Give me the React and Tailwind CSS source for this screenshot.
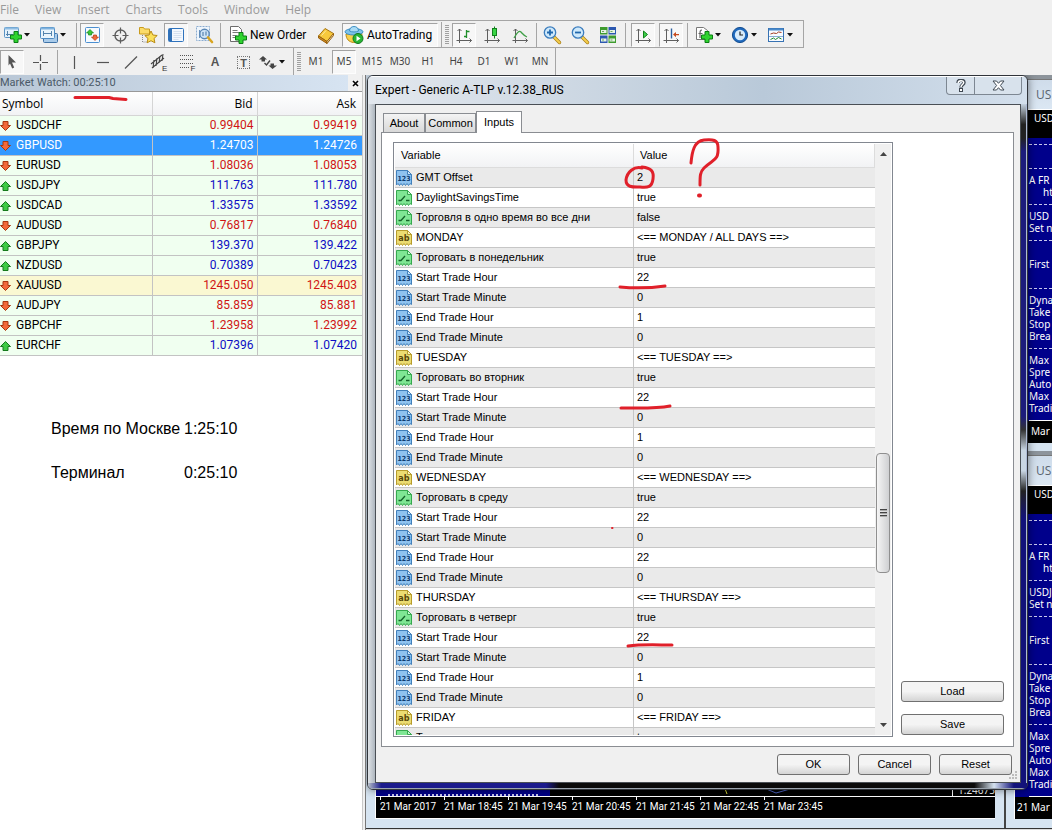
import React from 'react';

const UI = "font-['Liberation_Sans',sans-serif] text-[11px]";

/* ---------- icons ---------- */

function Plus({ x = 8, y = 7 }) {
  return (
    <path
      d={`M${x + 3.5} ${y}h4v3.5h3.5v4h-3.5v3.5h-4v-3.5h-3.5v-4h3.5z`}
      fill="#2fd32f"
      stroke="#0b7d14"
      strokeWidth="1"
    />
  );
}

function Icon({ children, size = 20 }) {
  return (
    <svg width={size} height={size} viewBox="0 0 20 20" fill="none" aria-hidden="true" className="shrink-0">
      {children}
    </svg>
  );
}

const NewChartIcon = () => (
  <Icon>
    <rect x="1.500" y="2.500" width="14" height="10" rx="1" fill="#e4f1fb" stroke="#5b93c4" />
    <path d="M1.500 3.500h14" stroke="#8fbde3" strokeWidth="2" />
    <path d="M4.500 6v5M3 9.500h7M12.500 6v2" stroke="#5584ad" />
    <Plus x={7.5} y={6.5} />
  </Icon>
);

const ProfilesIcon = () => (
  <Icon>
    <rect x="4.500" y="8.500" width="14" height="9" rx="1" fill="#a9cbea" stroke="#3f73a8" />
    <rect x="1.500" y="2.500" width="14" height="11" rx="1" fill="#e9f4fc" stroke="#4f8bc2" />
    <path d="M1.500 3.500h14" stroke="#7fb2de" strokeWidth="2" />
    <path d="M4.500 6v5M12.500 6v5M4 8.500h9" stroke="#5584ad" />
  </Icon>
);

const MarketIcon = () => (
  <Icon>
    <rect x="3.500" y="2.500" width="14" height="15" rx="1" fill="#f6faff" stroke="#4b8fd0" />
    <path d="M8 4.500l3.500 3.500h-2v2h-3V8h-2z" fill="#39c739" stroke="#12861a" strokeWidth=".7" />
    <path d="M13 15.500L9.500 12h2v-2h3v2h2z" fill="#f06a3a" stroke="#b53a12" strokeWidth=".7" />
  </Icon>
);

const TargetIcon = () => (
  <Icon>
    <circle cx="10.500" cy="10.500" r="5.500" stroke="#5d5d5d" strokeWidth="1.400" />
    <path d="M10.500 2.500v6M10.500 12.500v6M2.500 10.500h6M12.500 10.500h6" stroke="#5d5d5d" strokeWidth="1.200" />
  </Icon>
);

const FolderStarIcon = () => (
  <Icon>
    <path d="M1.500 2.500h4l1 1.500h5v5h-10z" fill="#fbdc6a" stroke="#c99b1c" />
    <path d="M4.500 10v7h4" stroke="#888" strokeDasharray="1 1" />
    <path d="M13 6l1.900 4 4.300.5-3.200 3 .9 4.300-3.900-2.100-3.900 2.100.9-4.300-3.200-3 4.300-.5z" fill="#fbe05b" stroke="#b98a12" />
  </Icon>
);

const NavigatorIcon = () => (
  <Icon>
    <rect x="2.500" y="3.500" width="15" height="13" rx="1" fill="#f3f8fe" stroke="#2f73bd" />
    <path d="M4.500 4v12" stroke="#2f6fb5" strokeWidth="3" />
    <path d="M7.500 6.500h8M7.500 8.500h8M7.500 10.500h8M7.500 12.500h8M7.500 14.500h5" stroke="#d5e1ef" />
  </Icon>
);

const TesterIcon = () => (
  <Icon>
    <path d="M2.500 1.500h13v14h-13z" fill="#eef5fc" stroke="#8bacd0" strokeDasharray="2 1" />
    <path d="M5.500 5v8" stroke="#6b93bd" />
    <circle cx="10.500" cy="9" r="4.700" fill="#c8e1f6" fillOpacity=".85" stroke="#5a87b5" strokeWidth="1.400" />
    <path d="M9 7v4M12 6.500v4" stroke="#41719f" />
    <path d="M14 12.500l4 4.500" stroke="#d9a520" strokeWidth="2.600" strokeLinecap="round" />
  </Icon>
);

const NewOrderIcon = () => (
  <Icon>
    <path d="M2.500 1.500h8l3 3v12h-11z" fill="#fff" stroke="#6d6d6d" />
    <path d="M4.500 5.500h5M4.500 7.500h7M4.500 10.500h4M4.500 12.500h3" stroke="#7a7a7a" />
    <Plus x={7.5} y={7.5} />
  </Icon>
);

const BookIcon = () => (
  <Icon>
    <path d="M2.500 11L9 3.500l8.500 5L11 16.500z" fill="#f7c93c" stroke="#a87410" />
    <path d="M2.500 11v2L11 18.500v-2z" fill="#d88e1c" stroke="#955f0e" />
    <path d="M11 16.500l6.500-8v2L11 18.500z" fill="#fff3cf" stroke="#955f0e" />
    <path d="M5.500 10.500l4.500-5" stroke="#fdeaa0" />
  </Icon>
);

const AutoIcon = () => (
  <Icon>
    <path d="M2 9c0 5 3 8 7.500 8.500S18 13 18 8.500z" fill="#f8d04c" stroke="#b98912" />
    <ellipse cx="10" cy="6.800" rx="9" ry="3.200" fill="#7ec3ea" stroke="#3d8fc4" />
    <path d="M5.500 6c0-3 2-4.500 4.500-4.500s4.500 1.500 4.500 4.500c-2 1.300-7 1.300-9 0z" fill="#a9dbf5" stroke="#3d8fc4" />
    <circle cx="14" cy="13.500" r="5" fill="#27b534" stroke="#10761b" />
    <path d="M12.500 10.800l4 2.700-4 2.700z" fill="#fff" />
  </Icon>
);

const Axes = () => (
  <path d="M5.500 4v14M2.500 15.500h15M3.500 6l2-2 2 2M15.500 13.500l2 2-2 2" stroke="#5f5f5f" />
);
const BarsIcon = () => (
  <Icon>
    <Axes />
    <path d="M12.500 5v8M12.500 6.500h3M10 11.500h2.500" stroke="#1f8f2a" strokeWidth="1.300" />
  </Icon>
);
const CandleIcon = () => (
  <Icon>
    <Axes />
    <path d="M12.500 1.500v12" stroke="#13811d" />
    <rect x="10.500" y="3.500" width="4" height="7" fill="#38d544" stroke="#13811d" />
  </Icon>
);
const LineIcon = () => (
  <Icon>
    <Axes />
    <path d="M4 13c3-5 5-8 7-6s3 4 6 5" stroke="#3f9f47" strokeWidth="1.300" />
  </Icon>
);
const ZoomIcon = ({ plus }) => (
  <Icon>
    <path d="M12 12l5.500 5.500" stroke="#a87f1b" strokeWidth="3.400" strokeLinecap="round" />
    <path d="M12 12l5.500 5.500" stroke="#f5ce4c" strokeWidth="2" strokeLinecap="round" />
    <circle cx="8" cy="7.500" r="5.700" fill="#cfe9fb" stroke="#3c7dbd" strokeWidth="1.300" />
    <path d={plus ? 'M5 7.500h6M8 4.500v6' : 'M5 7.500h6'} stroke="#2168ad" strokeWidth="1.800" />
  </Icon>
);
const TileIcon = () => (
  <Icon>
    <rect x="2" y="2" width="7.500" height="7.500" fill="#3e9b2f" />
    <rect x="10.500" y="2" width="7.500" height="7.500" fill="#2c58b0" />
    <rect x="2" y="10.500" width="7.500" height="7.500" fill="#2c58b0" />
    <rect x="10.500" y="10.500" width="7.500" height="7.500" fill="#3e9b2f" />
    <path d="M3 6.500h5.500M11.500 6.500h5.500M3 15h5.500M11.500 15h5.500" stroke="#e7f4e6" strokeWidth="3" />
    <path d="M4 6.500h2M12.500 6.500h2M4 15h2M12.500 15h2" stroke="#6da463" />
  </Icon>
);
const ScrollIcon = () => (
  <Icon>
    <Axes />
    <path d="M10.500 6v7l4-3.500z" fill="#3fd04a" stroke="#13811d" />
  </Icon>
);
const ShiftIcon = () => (
  <Icon>
    <Axes />
    <path d="M10.500 3.500v10" stroke="#2b5f9e" strokeWidth="1.400" />
    <path d="M12 9.500l3-2.500v2h3v1.200h-3v2z" fill="#c74a1c" />
  </Icon>
);
const IndicatorsIcon = () => (
  <Icon>
    <path d="M2.500 2.500h7l4 3v9h-11z" fill="#fff" stroke="#777" />
    <path d="M8 5c-2 0-2 1.500-2 3v5M4.500 8.500h4" stroke="#666" strokeWidth="1.200" />
    <Plus x={7.5} y={6.5} />
  </Icon>
);
const ClockIcon = () => (
  <Icon>
    <circle cx="10" cy="10" r="7.600" fill="#1f69bd" stroke="#164f91" />
    <circle cx="10" cy="10" r="5.200" fill="#d7ebfb" />
    <path d="M10 6.500V10h3" stroke="#222" strokeWidth="1.200" />
  </Icon>
);
const TemplateIcon = () => (
  <Icon>
    <rect x="2.500" y="3.500" width="15" height="13" fill="#f8fbff" stroke="#3772b3" />
    <path d="M3 4.500h14" stroke="#4b8bcb" strokeWidth="2" />
    <path d="M4.500 9l3-1 3 .5 2-1.500 3 .5" stroke="#a33c22" />
    <path d="M3 11.500h14" stroke="#8aaed3" />
    <path d="M4.500 14.500l3-1.500 2 1.500 3-2 3 1.500" stroke="#218a2d" />
  </Icon>
);

const CursorIcon = () => (
  <Icon><path d="M6.500 3l7.500 7.500h-4l2.200 5-2 .9-2.200-5-1.500 2z" fill="#555" /></Icon>
);
const CrossIcon = () => (
  <Icon><path d="M10.500 3v6M10.500 12v6M3 10.500h6M12 10.500h6" stroke="#555" strokeWidth="1.200" /></Icon>
);
const VLineIcon = () => <Icon><path d="M9.500 4v13" stroke="#555" strokeWidth="1.200" /></Icon>;
const HLineIcon = () => <Icon><path d="M4 10.500h12" stroke="#555" strokeWidth="1.200" /></Icon>;
const TrendIcon = () => <Icon><path d="M4 16.500L16 4.500" stroke="#555" strokeWidth="1.200" /></Icon>;
const ChannelIcon = () => (
  <Icon>
    <path d="M2 12L13 3M3 16L15 6M5 8l-1 8M8 6l-1 8M11 4l-1 7M14 2l-1 7" stroke="#444" strokeWidth="1.100" />
    <text x="13" y="19" fontSize="8" fill="#333" fontFamily="Liberation Sans">E</text>
  </Icon>
);
const FiboIcon = () => (
  <Icon>
    <path d="M3 3.500h14M3 7.500h14M3 11.500h14M3 15.500h9" stroke="#555" strokeDasharray="1 1" />
    <text x="13.500" y="19" fontSize="8" fill="#333" fontFamily="Liberation Sans">F</text>
  </Icon>
);
const LabelIcon = () => (
  <Icon>
    <path d="M4 4.500h13M4 16.500h13M4.500 5v12M16.500 5v12" stroke="#777" strokeDasharray="1 1" />
    <text x="10.500" y="14.500" textAnchor="middle" fontSize="11" fontWeight="bold" fill="#555" fontFamily="Liberation Sans">T</text>
  </Icon>
);
const ShapesIcon = () => (
  <Icon>
    <path d="M5 4l4 3.500H7v2H3.500v-2H1zM14.500 17l-4-3.500h2v-2h3.500v2h3z" fill="#444" />
    <path d="M6.500 11l2 2 3.500-4.500" stroke="#444" strokeWidth="1.400" />
  </Icon>
);

/* ---------- toolbar parts ---------- */

function Tool({ label, active, children }) {
  return (
    <button
      type="button"
      aria-label={label}
      className={`flex h-6 w-6 shrink-0 items-center justify-center ${
        active ? 'border border-[#fdfdfd] border-t-[#a3a3a3] border-l-[#a3a3a3] bg-[#f7f7f7]' : ''
      }`}
    >
      {children}
    </button>
  );
}

function DropTool({ label, children }) {
  return (
    <button type="button" aria-label={label} className="flex h-6 w-9 shrink-0 items-center gap-px pl-[3px]">
      {children}
      <svg width="6" height="4" viewBox="0 0 6 4" aria-hidden="true" className="shrink-0">
        <path d="M0 0h6L3 3.500z" fill="#111" />
      </svg>
    </button>
  );
}

const Sep = ({ wide }) => (
  <div className={`flex h-6 shrink-0 justify-center ${wide ? 'w-[11px]' : 'w-2'}`}>
    <div className="h-full w-px bg-[#a5a5a5]" />
  </div>
);

const Grip = () => (
  <svg width="4" height="20" viewBox="0 0 4 20" aria-hidden="true" className="mx-[3px] shrink-0">
    <path d="M2 0v20" stroke="#a0a0a0" strokeWidth="4" strokeDasharray="1 1" />
  </svg>
);

function Toolbars() {
  return (
    <>
      <div className="flex h-7 w-fit items-center border-t border-r border-b border-[#a5a5a5] pt-px pr-1">
        <DropTool label="New chart"><NewChartIcon /></DropTool>
        <DropTool label="Profiles"><ProfilesIcon /></DropTool>
        <Sep />
        <div className="flex gap-1">
          <Tool label="Market watch" active><MarketIcon /></Tool>
          <Tool label="Data window"><TargetIcon /></Tool>
          <Tool label="Favorites"><FolderStarIcon /></Tool>
          <Tool label="Navigator" active><NavigatorIcon /></Tool>
          <Tool label="Strategy tester"><TesterIcon /></Tool>
        </div>
        <Sep />
        <button
          type="button"
          className="flex h-6 w-[90px] items-center pl-1 font-['Roboto',sans-serif] text-[12px] whitespace-nowrap"
        >
          <NewOrderIcon />
          <span className="pl-0.5">New Order</span>
        </button>
        <Tool label="MetaEditor"><BookIcon /></Tool>
        <button
          type="button"
          className="mr-[3px] ml-1 flex h-6 w-24 items-center gap-[3px] border border-[#fdfdfd] border-t-[#a3a3a3] border-l-[#a3a3a3] bg-[#f7f7f7] pl-px font-['Roboto',sans-serif] text-[12px] whitespace-nowrap"
        >
          <AutoIcon />
          AutoTrading
        </button>
        <div className="h-full w-px bg-[#a5a5a5]" />
        <Grip />
        <div className="flex gap-1">
          <Tool label="Bar chart" active><BarsIcon /></Tool>
          <Tool label="Candlesticks"><CandleIcon /></Tool>
          <Tool label="Line chart"><LineIcon /></Tool>
        </div>
        <Sep />
        <div className="flex gap-1">
          <Tool label="Zoom in"><ZoomIcon plus /></Tool>
          <Tool label="Zoom out"><ZoomIcon /></Tool>
          <Tool label="Tile windows"><TileIcon /></Tool>
        </div>
        <Sep wide />
        <div className="flex gap-1">
          <Tool label="Auto scroll" active><ScrollIcon /></Tool>
          <Tool label="Chart shift" active><ShiftIcon /></Tool>
        </div>
        <Sep />
        <DropTool label="Indicators"><IndicatorsIcon /></DropTool>
        <DropTool label="Periods"><ClockIcon /></DropTool>
        <DropTool label="Templates"><TemplateIcon /></DropTool>
      </div>
      <div className="flex h-[27px] w-fit items-center border-r border-[#a5a5a5] pr-[3px]">
        <div className="flex gap-1">
          <Tool label="Cursor" active><CursorIcon /></Tool>
          <Tool label="Crosshair"><CrossIcon /></Tool>
        </div>
        <Sep wide />
        <div className="flex gap-1">
          <Tool label="Vertical line"><VLineIcon /></Tool>
          <Tool label="Horizontal line"><HLineIcon /></Tool>
          <Tool label="Trendline"><TrendIcon /></Tool>
          <Tool label="Equidistant channel"><ChannelIcon /></Tool>
          <Tool label="Fibonacci"><FiboIcon /></Tool>
          <button
            type="button"
            className="h-6 w-6 font-['Liberation_Sans',sans-serif] text-[12px] font-bold text-[#555]"
          >
            A
          </button>
          <Tool label="Text label"><LabelIcon /></Tool>
        </div>
        <DropTool label="Arrows"><ShapesIcon /></DropTool>
        <div className="ml-0.5 h-full w-px bg-[#a5a5a5]" />
        <Grip />
        <div className="flex gap-1">
          {['M1', 'M5', 'M15', 'M30', 'H1', 'H4', 'D1', 'W1', 'MN'].map((t) => (
            <button
              key={t}
              type="button"
              className={`flex h-6 w-6 items-center justify-center font-['Noto_Sans',sans-serif] text-[10px] text-[#444] ${
                t === 'M5' ? 'border border-[#fdfdfd] border-t-[#a3a3a3] border-l-[#a3a3a3] bg-[#f7f7f7]' : ''
              }`}
            >
              {t}
            </button>
          ))}
        </div>
      </div>
    </>
  );
}

/* ---------- market watch ---------- */

const QUOTES = [
  ['USDCHF', '0.99404', '0.99419', 'down'],
  ['GBPUSD', '1.24703', '1.24726', 'down', 'selected'],
  ['EURUSD', '1.08036', '1.08053', 'down'],
  ['USDJPY', '111.763', '111.780', 'up'],
  ['USDCAD', '1.33575', '1.33592', 'up'],
  ['AUDUSD', '0.76817', '0.76840', 'down'],
  ['GBPJPY', '139.370', '139.422', 'up'],
  ['NZDUSD', '0.70389', '0.70423', 'up'],
  ['XAUUSD', '1245.050', '1245.403', 'down', 'gold'],
  ['AUDJPY', '85.859', '85.881', 'down'],
  ['GBPCHF', '1.23958', '1.23992', 'down'],
  ['EURCHF', '1.07396', '1.07420', 'up'],
];

const ROW_BG = { selected: 'bg-[#3399ff]', gold: 'bg-[#faf8d2]' };

function Arrow({ dir }) {
  return (
    <svg width="12" height="12" viewBox="0 0 12 12" aria-hidden="true" className="shrink-0">
      {dir === 'up' ? (
        <path d="M5.500 1.500l5 5H8v4H3v-4H.5z" fill="#3ecb45" stroke="#157a1c" />
      ) : (
        <path d="M5.500 10.500l5-5H8v-4H3v4H.5z" fill="#f2693a" stroke="#a63710" />
      )}
    </svg>
  );
}

function MarketWatch() {
  return (
    <section className="flex w-[363px] shrink-0 flex-col border-r border-[#c9c9c9] bg-white">
      <div className="flex h-4 items-center bg-[#f0f0f0]">
        <h2 className="h-full flex-1 bg-gradient-to-r from-[#b9c7d6] to-[#d7e4f2] font-['Roboto',sans-serif] text-[11px] leading-4 text-[#4b5a68]">
          Market Watch: 00:25:10
        </h2>
        <button type="button" aria-label="Close" className="flex h-4 w-[14px] items-center justify-center">
          <svg width="7" height="7" viewBox="0 0 7 7" aria-hidden="true">
            <path d="M1 1l5 5M6 1L1 6" stroke="#000" strokeWidth="1.600" />
          </svg>
        </button>
      </div>
      <table className="w-full table-fixed border-separate border-spacing-0 border-t border-[#999]">
        <thead>
          <tr className="h-6 bg-gradient-to-b from-white to-[#f1f2f4] text-[12px]">
            <th className="w-[153px] border-r border-b border-[#d5d5d5] pl-0.5 text-left font-normal">Symbol</th>
            <th className="border-r border-b border-[#d5d5d5] pr-1 text-right font-normal">Bid</th>
            <th className="border-b border-[#d5d5d5] pr-1.5 text-right font-normal">Ask</th>
          </tr>
        </thead>
        <tbody className="font-['Roboto',sans-serif] text-[12px] leading-[19px]">
          {QUOTES.map(([sym, bid, ask, dir, kind]) => {
            const num = kind === 'selected' ? 'text-white' : dir === 'up' ? 'text-[#0d0dc4]' : 'text-[#d01414]';
            return (
              <tr key={sym} className={ROW_BG[kind] || 'bg-[#f0fff0]'}>
                <td className={`border-r border-b border-[#c3c3c3] p-0 ${kind === 'selected' ? 'text-white' : ''}`}>
                  <div className="flex h-[19px] items-center gap-1">
                    <Arrow dir={dir} />
                    {sym}
                  </div>
                </td>
                <td className={`border-r border-b border-[#c3c3c3] py-0 pr-[3px] text-right ${num}`}>{bid}</td>
                <td className={`border-b border-[#c3c3c3] py-0 pr-[5px] text-right ${num}`}>{ask}</td>
              </tr>
            );
          })}
        </tbody>
      </table>
      <dl className="grid grid-cols-[133px_auto] justify-start gap-y-5 pt-[61px] pl-[51px] font-['Liberation_Sans',sans-serif] text-[16px] leading-6">
        <dt className="whitespace-nowrap">Время по Москве</dt>
        <dd>1:25:10</dd>
        <dt>Терминал</dt>
        <dd>0:25:10</dd>
      </dl>
    </section>
  );
}

/* ---------- expert dialog ---------- */

const day = (name, ru, end) => [
  ['ab', name, `<== ${name} ==>`],
  ['bool', ru, 'true'],
  ['int', 'Start Trade Hour', '22'],
  ['int', 'Start Trade Minute', '0'],
  ['int', 'End Trade Hour', end],
  ['int', 'End Trade Minute', '0'],
];

const INPUTS = [
  ['int', 'GMT Offset', '2'],
  ['bool', 'DaylightSavingsTime', 'true'],
  ['bool', 'Торговля в одно время во все дни', 'false'],
  ['ab', 'MONDAY', '<== MONDAY / ALL DAYS ==>'],
  ...day('MONDAY', 'Торговать в понедельник', '1').slice(1),
  ...day('TUESDAY', 'Торговать во вторник', '1'),
  ...day('WEDNESDAY', 'Торговать в среду', '22'),
  ...day('THURSDAY', 'Торговать в четверг', '1'),
  ['ab', 'FRIDAY', '<== FRIDAY ==>'],
  ['bool', 'Торговать в пятницу', 'true'],
];

const TYPE = {
  int: { fill: '#8fc3f0', edge: '#4180bb', fold: '#cfe6fa' },
  bool: { fill: '#7fe694', edge: '#36a94f', fold: '#c8f8d0' },
  ab: { fill: '#ecdc72', edge: '#b79c2c', fold: '#faf3c0' },
};

function TypeIcon({ type }) {
  const c = TYPE[type];
  return (
    <svg width="16" height="16" viewBox="0 0 16 16" aria-hidden="true" className="shrink-0">
      <path
        d="M.5.500h11l4 4v10l-1.500-1-1.500 2-1.500-2-1.500 2-1.500-2-1.500 2-1.500-2-1.500 2-1.500-2L.5 15z"
        fill={c.fill}
        stroke={c.edge}
      />
      <path d="M11.500.500v4h4z" fill={c.fold} stroke={c.edge} />
      {type === 'bool' ? (
        <path d="M2.500 10.500H5L9 6M10 10.500h3.500" fill="none" stroke="#14632a" strokeWidth="1.300" />
      ) : (
        <text
          x="8"
          y="11"
          textAnchor="middle"
          fontSize={type === 'int' ? 7 : 9}
          fontWeight="bold"
          fontFamily="DejaVu Sans Condensed, DejaVu Sans"
          fill={type === 'int' ? '#0d3c70' : '#584808'}
        >
          {type === 'int' ? '123' : 'ab'}
        </text>
      )}
    </svg>
  );
}

function WinButton({ children, className = '' }) {
  return (
    <button
      type="button"
      className={`h-[21px] rounded-[3px] border border-[#707070] bg-gradient-to-b from-[#f4f4f4] from-50% to-[#d4d4d4] leading-[19px] ${UI} ${className}`}
    >
      {children}
    </button>
  );
}

function ScrollBar() {
  return (
    <div className="flex w-4 shrink-0 flex-col items-center bg-[#f0f0f0] pt-2 pb-2" aria-hidden="true">
      <svg width="7" height="4" viewBox="0 0 7 4"><path d="M0 4L3.500 0 7 4z" fill="#444" /></svg>
      <div className="flex-[298]" />
      <div className="flex h-[120px] w-[14px] flex-col items-center justify-center gap-px rounded-sm border border-[#8f8f8f] bg-gradient-to-r from-[#f5f5f5] to-[#cfd0d2]">
        <div className="h-0.5 w-[7px] border-t border-[#444] bg-[#aaa]" />
        <div className="h-0.5 w-[7px] border-t border-[#444] bg-[#aaa]" />
        <div className="h-0.5 w-[7px] border-t border-[#444] bg-[#aaa]" />
      </div>
      <div className="flex-[151]" />
      <svg width="7" height="4" viewBox="0 0 7 4"><path d="M0 0h7L3.500 4z" fill="#444" /></svg>
    </div>
  );
}

function Tab({ children, selected, className }) {
  return (
    <button
      type="button"
      role="tab"
      aria-selected={selected ? 'true' : 'false'}
      className={`border border-b-0 border-[#8a8d92] ${UI} ${
        selected ? 'z-10 -mb-px h-[22px] bg-white pb-px' : 'h-[19px] bg-gradient-to-b from-[#f4f4f4] to-[#d8d8d8]'
      } ${className}`}
    >
      {children}
    </button>
  );
}

function ExpertDialog() {
  return (
    <div
      role="dialog"
      aria-label="Expert"
      className="absolute top-0 right-6 left-px flex flex-col overflow-hidden rounded-md border border-[#30343a] shadow-[0_0_8px_rgba(0,0,0,0.5)]"
    >
      <div className="flex h-7 justify-between border-t border-white bg-gradient-to-r from-[#e3e8ee] via-[#b9c9d9] via-60% to-[#d3dfec] pr-[5px] pl-[7px]">
        <h1 className="font-['Roboto',sans-serif] text-[12px] leading-[26px] whitespace-nowrap">
          Expert - Generic A-TLP v.12.38_RUS
        </h1>
        <div className="flex h-[18px] overflow-hidden rounded-b-[4px] border border-t-0 border-[#7d8792] bg-[#d8e2ec]">
          <button type="button" aria-label="Help" className="flex w-7 items-center justify-center border-r border-[#7d8792]">
            <svg width="10" height="13" viewBox="0 0 10 13" aria-hidden="true">
              <path d="M2 4c0-4 6-3.500 6-.5C8 6 5 5.500 5 8.500" fill="none" stroke="#3f4852" strokeWidth="3.400" />
              <path d="M2.200 4c0-3 5.500-3 5.500-.5C7.700 5.500 5 5.500 5 8" fill="none" stroke="#fff" strokeWidth="1.500" />
              <rect x="3.500" y="9.500" width="3" height="3" fill="#fff" stroke="#3f4852" />
            </svg>
          </button>
          <button type="button" aria-label="Close" className="flex w-[46px] items-center justify-center">
            <svg width="13" height="11" viewBox="0 0 13 11" aria-hidden="true">
              <path
                d="M1 1h3.500l2 2.300L8.500 1H12L8.400 5.500 12 10H8.500l-2-2.300L4.500 10H1l3.600-4.500z"
                fill="#fff"
                stroke="#3f4852"
              />
            </svg>
          </button>
        </div>
      </div>
      <div className="flex">
        <div className="w-[7px] bg-gradient-to-r from-[#dfe3e7] to-[#aeb6be]" />
        <div className="flex min-w-0 flex-1 flex-col border border-[#4a4f55] bg-[#f0f0f0] pt-1.5">
          <div className="flex h-[21px] items-end pl-[7px]" role="tablist">
            <Tab className="w-[42px]">About</Tab>
            <Tab className="w-[51px]">Common</Tab>
            <Tab selected className="w-[46px]">Inputs</Tab>
          </div>
          <div className="mr-1.5 ml-[5px] flex border border-[#8a8d92] bg-white py-[9px] pr-[9px] pl-[11px]">
            <div className="flex min-w-0 flex-1 border border-[#828790] p-px">
              <div className="h-[591px] min-w-0 flex-1 overflow-hidden">
                <table className={`w-full table-fixed border-separate border-spacing-0 ${UI}`}>
                  <thead>
                    <tr className="h-6 bg-gradient-to-b from-white to-[#f1f2f4]">
                      <th className="w-[239px] border-r border-b border-[#dcdcdc] py-0 pl-1.5 text-left font-normal">Variable</th>
                      <th className="border-r border-b border-[#dcdcdc] py-0 pl-1.5 text-left font-normal">Value</th>
                    </tr>
                  </thead>
                  <tbody>
                    {INPUTS.map(([type, name, value], i) => (
                      <tr key={i} className={i % 2 === 0 ? 'bg-[#eaeaea]' : 'bg-white'}>
                        <td className="border-r border-b border-[#c6c6c6] p-0">
                          <div className="flex h-[19px] items-center gap-1 pl-px whitespace-nowrap">
                            <TypeIcon type={type} />
                            {name}
                          </div>
                        </td>
                        <td className="border-b border-[#c6c6c6] py-0 pl-[3px] leading-[19px]">{value}</td>
                      </tr>
                    ))}
                  </tbody>
                </table>
              </div>
              <ScrollBar />
            </div>
            <div className="ml-2 flex w-[103px] flex-col justify-end gap-3 pb-0.5">
              <WinButton>Load</WinButton>
              <WinButton>Save</WinButton>
            </div>
          </div>
          <div className="relative flex justify-end gap-2 px-2 py-[7px]">
            <WinButton className="w-[73px]">OK</WinButton>
            <WinButton className="w-[73px]">Cancel</WinButton>
            <WinButton className="w-[73px]">Reset</WinButton>
            <svg width="9" height="9" viewBox="0 0 9 9" aria-hidden="true" className="absolute right-0.5 bottom-0.5">
              <path d="M6 0h2v2H6zM3 3h2v2H3zM6 3h2v2H6zM0 6h2v2H0zM3 6h2v2H3zM6 6h2v2H6z" fill="#bcbcbc" />
            </svg>
          </div>
        </div>
        <div className="w-[6px] border-r border-[#aebbd6] bg-[linear-gradient(to_bottom,#c5d2df_0%,#222_3%,#222_5%,#1c1c7c_7%,#1c1c7c_46%,#333_48%,#c9d6e3_51%,#c9d6e3_54%,#222_57%,#12127a_61%,#12127a_100%)]" />
      </div>
      <div className="h-1.5 border-b border-[#9aa3ad] bg-[linear-gradient(to_right,#b8c0c8_0%,#1b1b8c_2%,#1b1b8c_27%,#0a0a0a_29%,#0a0a0a_92%,#d5e2ef_95%,#12127a_98%)]" />
    </div>
  );
}

/* ---------- chart windows ---------- */

const chartText = (pair) => [
  '-', '', '-', 'A FR', '>ht', '-', pair, 'Set n', '-', '', 'First', '', '-',
  'Dyna', 'Take', 'Stop', 'Brea', '-',
  'Max', 'Spre', 'Auto', 'Max', 'Tradi',
];

function SideChart({ pair }) {
  return (
    <div className="flex flex-col bg-[#d6e4f1] pl-2">
      <div className="h-[30px] overflow-hidden border-t border-[#777] bg-gradient-to-b from-[#cfdcea] to-[#dbe7f3] pl-[22px] text-[12px] leading-[30px] text-[#5a6570]">
        US
      </div>
      <div className="overflow-hidden border-t border-l border-white bg-black font-['Noto_Sans',sans-serif] text-[10px] leading-3 whitespace-nowrap text-white">
        <div className="h-7 pt-0.5 pl-[19px]">USD</div>
        <div className="h-[283px] bg-[#00008b] pl-[14px]">
          {chartText(pair).map((t, i) => (
            <div key={i} className={`flex h-3 items-center ${t[0] === '>' ? 'pl-[14px]' : ''}`}>
              {t === '-' ? <div className="w-full border-t border-dashed border-[#c9c9ee]" /> : t.replace('>', '')}
            </div>
          ))}
          <div className="mt-1.5 border-t border-white" />
        </div>
        <div className="h-[22px] pt-1 pl-0.5">21 Mar</div>
      </div>
    </div>
  );
}

const TIMES = ['21 Mar 2017', '21 Mar 18:45', '21 Mar 19:45', '21 Mar 20:45', '21 Mar 21:45', '21 Mar 22:45', '21 Mar 23:45'];

function Workspace() {
  return (
    <section className="relative flex min-w-0 flex-1 flex-col overflow-hidden border-l border-[#777] bg-[#9aa0a6]">
      <div className="flex flex-1">
        <div className="flex w-[640px] shrink-0 flex-col justify-end border-r-2 border-[#444] bg-[#d6e4f1] px-[9px] pb-[9px]">
          <div className="flex h-16 flex-col border-b border-l border-white bg-black">
            <div className="flex flex-1 items-end justify-between border-b border-white">
              <div className="flex h-full w-[174px] items-end bg-[#00008b] px-3">
                <div className="w-full border-t-2 border-dotted border-[#c9c9ee]" />
              </div>
              <svg width="80" height="10" viewBox="0 0 80 10" fill="none" aria-hidden="true" className="ml-40">
                <path d="M14 0l3 8" stroke="#d8d83a" />
                <path d="M54 2l12 5 14-4" stroke="#4c63c4" />
              </svg>
              <div className="flex-1" />
              <div className="border-l border-white pl-[5px] font-['Noto_Sans',sans-serif] text-[10px] leading-3 text-white">
                1.24675
              </div>
            </div>
            <div className="flex h-[21px] font-['Roboto',sans-serif] text-[10px] whitespace-nowrap text-white">
              {TIMES.map((t) => (
                <div key={t} className="w-16 shrink-0">
                  <div className="ml-1 h-[3px] w-px bg-white" />
                  <div className="pl-1 leading-[14px]">{t}</div>
                </div>
              ))}
            </div>
          </div>
        </div>
        <div className="flex min-w-0 flex-1 flex-col justify-end gap-1 overflow-hidden bg-[#8d949b]">
          <div className="border-b-[8px] border-[#d6e4f1]"><SideChart pair="USD" /></div>
          <div className="border-b-[9px] border-[#d6e4f1]"><SideChart pair="USDJ" /></div>
        </div>
      </div>
      <div className="h-0.5 border-t border-[#333] bg-[#ddd]" />
      <ExpertDialog />
    </section>
  );
}

function Annotations() {
  return (
    <svg
      width="1052"
      height="830"
      viewBox="0 0 1052 830"
      fill="none"
      stroke="#e0202a"
      strokeWidth="3"
      strokeLinecap="round"
      strokeLinejoin="round"
      aria-hidden="true"
      className="pointer-events-none absolute top-0 left-0"
    >
      <path d="M75 97.500h34l4 1 13 1" />
      <path d="M642 168c-8-2-15 4-16 12 0 8 8 7 14 7 8 1 12 0 13-8 1-7-1-11-11-12z" />
      <path d="M691 163c1-11 3-22 13-23 9-1 14 0 14 7 1 14-5 12-14 21-4 4-4 8-4 17" />
      <path d="M699 195.500h1" strokeWidth="4" />
      <path d="M620 287c11 1 31 1 45-1" />
      <path d="M621 408c17 0 34 1 49-2" />
      <path d="M628 646c14-2 30-1 44-1" />
      <path d="M612 528h.5" strokeWidth="2" />
    </svg>
  );
}

export default function App() {
  return (
    <div className="relative flex min-h-screen flex-col overflow-hidden bg-[#f0f0f0] font-['Open_Sans','Noto_Sans',sans-serif] text-black">
      <header className="shrink-0">
        <nav className="flex h-5 items-center gap-4 text-[12px] text-[#9a9a9a]">
          {['File', 'View', 'Insert', 'Charts', 'Tools', 'Window', 'Help'].map((m) => (
            <a key={m} href={`#${m.toLowerCase()}`}>{m}</a>
          ))}
        </nav>
        <Toolbars />
      </header>
      <main className="flex flex-1 gap-0.5">
        <MarketWatch />
        <Workspace />
      </main>
      <Annotations />
    </div>
  );
}
